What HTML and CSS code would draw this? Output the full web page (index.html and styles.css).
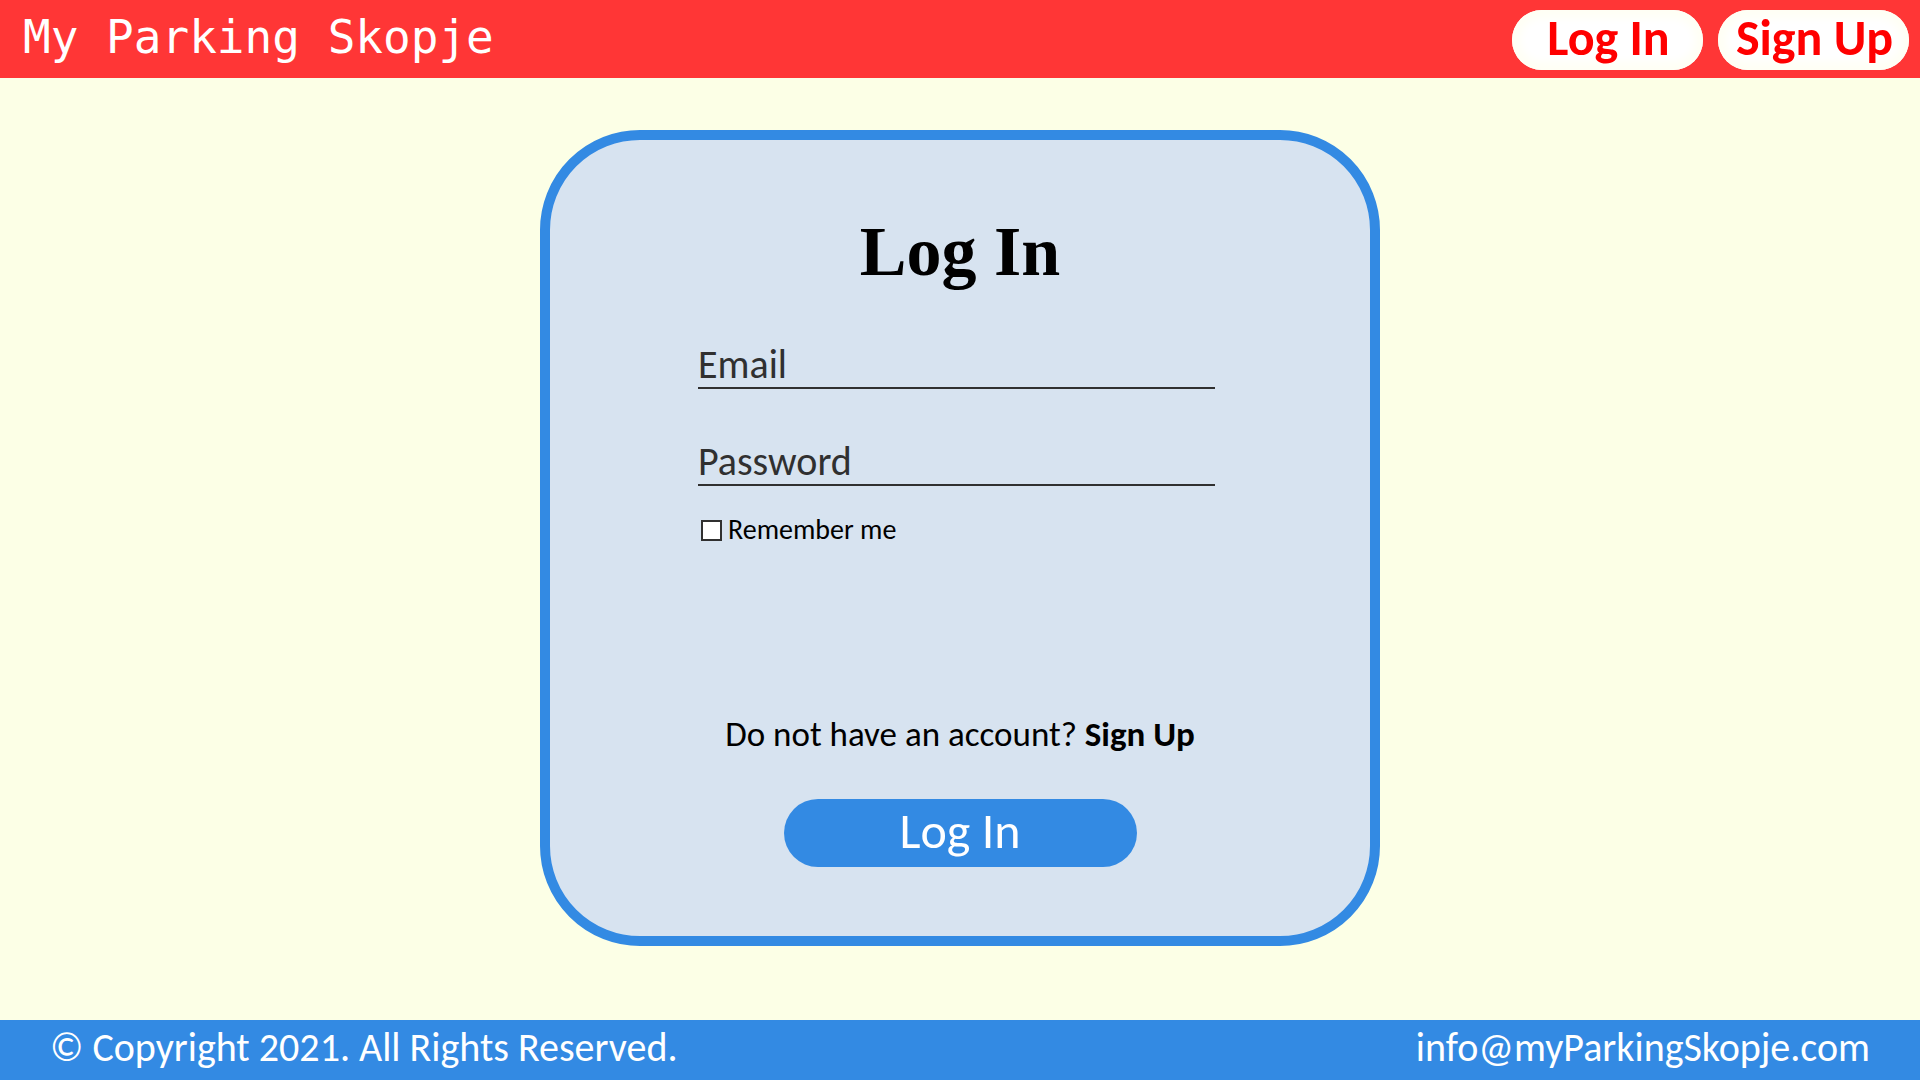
FILE: index.html
```html
<!DOCTYPE html>
<html lang="en">
<head>
  <meta charset="utf-8">
  <meta name="viewport" content="width=device-width, initial-scale=1">
  <title>My Parking Skopje</title>
  <link rel="stylesheet" href="styles.css">
</head>
<body>
  <header class="site-header">
    <a class="brand" href="#">My Parking Skopje</a>
    <nav class="nav">
      <a class="pill" href="#login">Log In</a>
      <a class="pill" href="#signup">Sign Up</a>
    </nav>
  </header>

  <main class="main">
    <form class="card" id="login">
      <h1 class="title">Log In</h1>
      <div class="fields">
        <input class="field" type="email" placeholder="Email" aria-label="Email">
        <input class="field" type="password" placeholder="Password" aria-label="Password">
        <label class="remember" for="remember">
          <input class="checkbox" type="checkbox" id="remember">
          Remember me
        </label>
      </div>
      <p class="prompt">Do not have an account? <a class="prompt-link" href="#signup">Sign Up</a></p>
      <button class="submit" type="submit">Log In</button>
    </form>
  </main>

  <footer class="site-footer">
    <span>© Copyright 2021. All Rights Reserved.</span>
    <a class="contact" href="mailto:info@myParkingSkopje.com">info@myParkingSkopje.com</a>
  </footer>
</body>
</html>
```
FILE: styles.css
```css
* {
  box-sizing: border-box;
}

body {
  margin: 0;
  min-height: 100vh;
  display: flex;
  flex-direction: column;
  background: #fcffe6;
  color: #000;
  font-family: Carlito, Lato, sans-serif;
}

a {
  color: inherit;
  text-decoration: none;
}

.site-header {
  display: flex;
  flex-wrap: wrap;
  align-items: center;
  justify-content: space-between;
  min-height: 78px;
  padding: 2px 11px 0 23px;
  background: #ff3636;
}

.brand {
  padding-bottom: 6px;
  color: #fff;
  font-family: "DejaVu Sans Mono", monospace;
  font-size: 46px;
  line-height: 64px;
}

.nav {
  display: flex;
  gap: 15px;
}

.pill {
  width: 191px;
  padding: 0 0 4px 2px;
  border-radius: 30px;
  background: #fff;
  box-shadow: inset 0 0 8px 8px #fffff5;
  color: #f00;
  font-size: 50px;
  font-weight: 700;
  line-height: 56px;
  text-align: center;
}

.main {
  flex: 1;
  display: flex;
  justify-content: center;
  align-items: flex-start;
  padding: 52px 16px 74px;
}

.card {
  display: flex;
  flex-direction: column;
  align-items: center;
  width: 100%;
  max-width: 840px;
  padding: 64px 0 69px;
  border: 10px solid #338ae3;
  border-radius: 100px;
  background: #d7e3f0;
}

.title {
  margin: 0 0 41px;
  font-family: Gabriola, "Liberation Serif", serif;
  font-size: 70px;
  font-weight: 700;
  line-height: 96px;
}

.fields {
  display: flex;
  flex-direction: column;
  align-self: stretch;
  padding: 0 155px 0 148px;
}

.field {
  width: 100%;
  height: 48px;
  margin-bottom: 49px;
  padding: 0;
  border: 0;
  border-bottom: 2px solid #303030;
  border-radius: 0;
  outline: 0;
  background: transparent;
  color: #303030;
  font-family: inherit;
  font-size: 40px;
}

.field::placeholder {
  color: #303030;
  opacity: 1;
}

.field[type="password"] {
  margin-bottom: 28px;
}

.remember {
  display: flex;
  align-items: center;
  gap: 6px;
  padding-left: 3px;
  font-size: 28px;
  line-height: 32px;
}

.checkbox {
  appearance: none;
  width: 21px;
  height: 21px;
  margin: 0;
  border: 2px solid #303030;
  background: #fff;
}

.checkbox:checked {
  background: #338ae3;
}

.prompt {
  margin: 170px 0 47px;
  font-size: 35px;
  line-height: 36px;
}

.prompt-link {
  font-weight: 700;
}

.submit {
  width: 353px;
  padding: 0 0 4px;
  border: 0;
  border-radius: 34px;
  background: #338ae3;
  color: #fff;
  font-family: inherit;
  font-size: 50px;
  line-height: 64px;
}

.site-footer {
  display: flex;
  flex-wrap: wrap;
  align-items: center;
  justify-content: space-between;
  min-height: 60px;
  padding: 0 50px 4px;
  background: #338ae3;
  color: #fff;
  font-size: 40px;
  line-height: 56px;
}
```
